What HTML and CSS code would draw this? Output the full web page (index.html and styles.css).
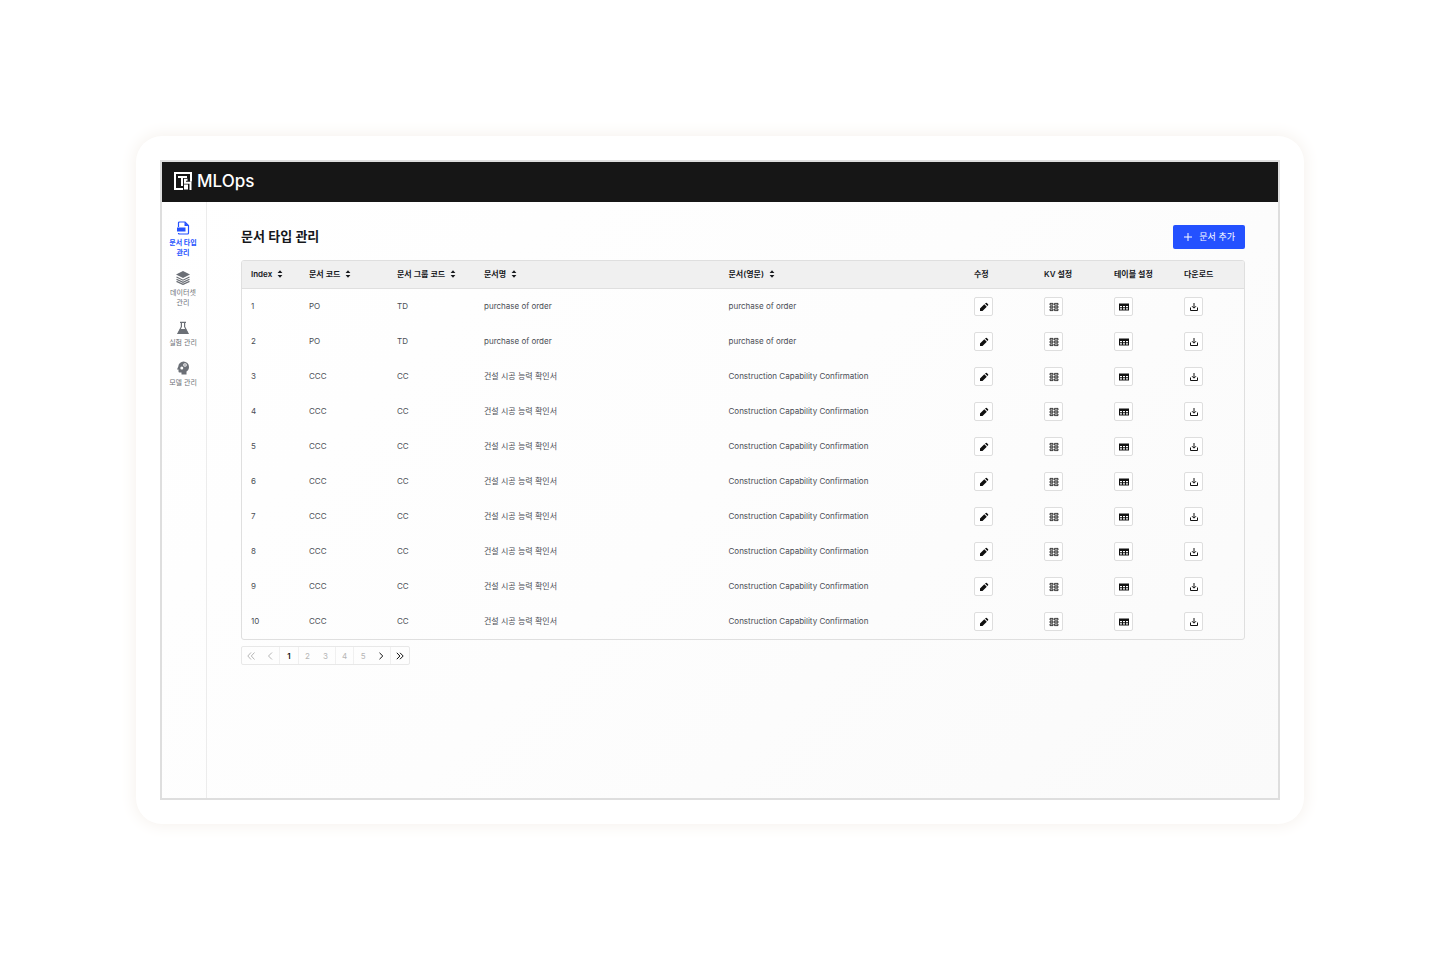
FILE: index.html
```html
<!DOCTYPE html>
<html lang="ko">
<head>
<meta charset="utf-8">
<meta name="viewport" content="width=device-width, initial-scale=1">
<title>MLOps</title>
<link rel="stylesheet" href="styles.css">
<script src="app.js" defer></script>
</head>
<body>
<svg class="sprite" aria-hidden="true">
  <symbol id="i-sort" viewBox="0 0 6 8"><path d="M3 0.2 5.400 3H.6zM3 7.8 5.400 5H.6z"/></symbol>
  <symbol id="i-edit" viewBox="0 0 10 10"><path d="M1 9V6.500L5.300 2.200 7.800 4.700 3.500 9zM6 1.600 6.800.9Q7.300.5 7.800.9L9.100 2.200Q9.500 2.700 9.100 3.200L8.400 4z"/></symbol>
  <symbol id="i-kv" viewBox="0 0 10 10"><path fill="none" stroke="currentColor" stroke-width=".8" d="M1 1.400h3v1.600H1zM5.400 1.400H9v1.600H5.400zM1 4.200h3v1.600H1zM5.400 4.200H9v1.600H5.400zM1 7h3v1.600H1zM5.400 7H9v1.600H5.400z"/></symbol>
  <symbol id="i-table" viewBox="0 0 10 10"><path fill-rule="evenodd" d="M0 1.500h10v7H0zM1 4v1.300h2V4zM4 4v1.300h2V4zM7 4v1.300h2V4zM1 6.200v1.400h2V6.200zM4 6.200v1.400h2V6.200zM7 6.200v1.400h2V6.200z"/></symbol>
  <symbol id="i-down" viewBox="0 0 10 10"><path fill="none" stroke="currentColor" stroke-width="1" d="M5 1v5M3 4.200l2 2 2-2M1.500 5.500v3h7v-3"/></symbol>
</svg>
<div class="device">
  <div class="screen">
    <header class="topbar">
      <svg class="logo" viewBox="0 0 18 18" aria-hidden="true"><path d="M9 17H1V1h16v8.500M4 5h9M8 5v9M13.500 7.800h-2.500v3h5.500V18M11 17.500v-4h2v4"/></svg>
      <span class="brand">MLOps</span>
    </header>
    <div class="body">
      <nav class="side" aria-label="메뉴">
        <a class="item active" href="#types"><svg viewBox="0 0 14 14" aria-hidden="true"><path fill="none" stroke="currentColor" stroke-width="1.200" d="M2.500 6V2Q2.500 1 3.500 1H9l3.500 3.500V12q0 1-1 1h-8q-1 0-1-1"/><path d="M8.500 1v4h4zM1 6.500h8.500v4H1z"/></svg><span>문서 타입<br>관리</span></a>
        <a class="item" href="#datasets"><svg viewBox="0 0 14 14" aria-hidden="true"><path d="M7 0 14 3.500 7 7 0 3.500z"/><path fill="none" stroke="currentColor" stroke-width="1.200" d="M.5 6 7 9.200 13.500 6M.5 8.300 7 11.400l6.500-3.100M.5 10.400 7 13.400l6.500-3"/></svg><span>데이터셋<br>관리</span></a>
        <a class="item" href="#experiments"><svg viewBox="0 0 14 14" aria-hidden="true"><path fill="none" stroke="currentColor" stroke-width="1.200" d="M4 1.300h6M5.400 1.300v4.400L2 12.300h10L8.600 5.700V1.300"/><path d="M4 8h6l2.500 5h-11z"/></svg><span>실험 관리</span></a>
        <a class="item" href="#models"><svg viewBox="0 0 14 14" aria-hidden="true"><path fill-rule="evenodd" d="M7.500.5a5.500 5.500 0 0 1 5.500 5.500c0 2-1 3.500-2.500 4.500v3H5.500v-2H3.500q-1 0-1-1V8.500H1L2.300 5.500A5.300 5.300 0 0 1 7.500.5zM9 2.200a1.800 1.800 0 1 0 0 3.600 1.800 1.800 0 0 0 0-3.600zM5.800 5.500a1.500 1.500 0 1 0 0 3 1.500 1.500 0 0 0 0-3z"/><circle cx="9" cy="4" r=".8"/></svg><span>모델 관리</span></a>
      </nav>
      <main class="main">
        <div class="head">
          <h1>문서 타입 관리</h1>
          <button class="add" type="button"><svg viewBox="0 0 8 8" aria-hidden="true"><path fill="none" stroke="currentColor" d="M4 0v8M0 4h8"/></svg>문서 추가</button>
        </div>
        <div class="frame">
          <table>
            <colgroup><col class="c-index"><col class="c-code"><col class="c-group"><col><col><col class="c-act"><col class="c-act"><col class="c-act"><col class="c-act"></colgroup>
            <thead>
              <tr>
                <th><button type="button">Index<svg><use href="#i-sort"/></svg></button></th>
                <th><button type="button">문서 코드<svg><use href="#i-sort"/></svg></button></th>
                <th><button type="button">문서 그룹 코드<svg><use href="#i-sort"/></svg></button></th>
                <th><button type="button">문서명<svg><use href="#i-sort"/></svg></button></th>
                <th><button type="button">문서(영문)<svg><use href="#i-sort"/></svg></button></th>
                <th class="tool">수정</th><th class="tool">KV 설정</th><th class="tool">테이블 설정</th><th class="tool">다운로드</th>
              </tr>
            </thead>
            <tbody id="rows"></tbody>
          </table>
        </div>
        <nav class="pager" aria-label="페이지">
          <button type="button" disabled aria-label="처음"><svg viewBox="0 0 8 8"><path d="M4 .5.800 4 4 7.500M7.500.5 4.300 4l3.200 3.500"/></svg></button>
          <button type="button" disabled aria-label="이전"><svg viewBox="0 0 8 8"><path d="M6 .5 2.500 4 6 7.500"/></svg></button>
          <button type="button" class="current line" aria-current="page">1</button>
          <button type="button" class="line">2</button>
          <button type="button">3</button>
          <button type="button" class="line">4</button>
          <button type="button" class="line">5</button>
          <button type="button" class="go" aria-label="다음"><svg viewBox="0 0 8 8"><path d="M2.500.8 5.800 4 2.500 7.200"/></svg></button>
          <button type="button" class="go line" aria-label="마지막"><svg viewBox="0 0 8 8"><path d="M.8.8 3.900 4 .8 7.200M4 .8 7.200 4 4 7.200"/></svg></button>
        </nav>
      </main>
    </div>
  </div>
</div>
</body>
</html>
```
FILE: app.js
```js
const order = ["PO", "TD", "purchase of order", "purchase of order"];
const capability = ["CCC", "CC", "건설 시공 능력 확인서", "Construction Capability Confirmation"];
const documents = [order, order, ...Array(8).fill(capability)];
const actions = [["edit", "수정"], ["kv", "KV 설정"], ["table", "테이블 설정"], ["down", "다운로드"]];

document.getElementById("rows").innerHTML = documents.map((doc, i) => {
  const cells = [i + 1, ...doc].map((text) => `<td>${text}</td>`).join("");
  const buttons = actions.map(([icon, label]) =>
    `<td class="tool"><button class="act" type="button" aria-label="${label}"><svg><use href="#i-${icon}"/></svg></button></td>`).join("");
  return `<tr>${cells}${buttons}</tr>`;
}).join("");
```
FILE: styles.css
```css
* { box-sizing: border-box; }
body {
  margin: 0;
  min-height: 100vh;
  padding: 136px;
  display: flex;
  background: #fff;
  color: #16181c;
  font: 8px/10px Inter, "Noto Sans CJK KR", sans-serif;
}
button { font: inherit; color: inherit; background: none; border: 0; padding: 0; cursor: pointer; }
svg { display: block; fill: currentColor; flex: none; }
.sprite { position: absolute; width: 0; height: 0; }
.device {
  flex: 1;
  display: flex;
  padding: 24px;
  border-radius: 26px;
  background: #fff;
  box-shadow: 0 0 16px 2px #f6f2ee;
}
.screen {
  flex: 1;
  display: flex;
  flex-direction: column;
  border: 2px solid #dedede;
  background: linear-gradient(135deg, #fff, #fdfdfd 50%, #fafafa);
}
.topbar {
  height: 40px;
  padding: 0 12px 2px;
  display: flex;
  align-items: center;
  gap: 5px;
  background: #161616;
  color: #fff;
}
.logo { width: 18px; height: 18px; fill: none; stroke: currentColor; stroke-width: 2; }
.brand { font-size: 17px; line-height: 24px; font-weight: 500; }
.body { flex: 1; display: flex; }
.side {
  width: 45px;
  padding: 19px 2px 0 0;
  border-right: 1px solid #ececec;
  display: flex;
  flex-direction: column;
  align-items: center;
  gap: 13px;
}
.item {
  display: flex;
  flex-direction: column;
  align-items: center;
  gap: 3px;
  color: #6b6f76;
  font-size: 7px;
  text-align: center;
  text-decoration: none;
  white-space: nowrap;
}
.item svg { width: 14px; height: 14px; }
.active { color: #2451ff; font-weight: 700; }
.main { flex: 1; min-width: 0; padding: 23px 33px 0 34px; }
.head { display: flex; justify-content: space-between; align-items: center; margin-bottom: 11px; }
h1 { margin: 0; padding-bottom: 2px; font-size: 13px; line-height: 20px; font-weight: 600; }
.add {
  height: 24px;
  padding: 0 10px 0 11px;
  display: flex;
  align-items: center;
  gap: 7px;
  border-radius: 2px;
  background: #2451ff;
  color: #fff;
  font-size: 9px;
}
.add svg { width: 8px; height: 8px; }
.frame { border: 1px solid #dfdfdf; border-radius: 3px; overflow: hidden; }
table { width: 100%; table-layout: fixed; border-collapse: separate; border-spacing: 0; }
th, td { padding: 0 0 2px 9px; text-align: left; white-space: nowrap; }
th { height: 28px; background: #f0f0f0; border-bottom: 1px solid #dfdfdf; font-weight: 600; }
th button { display: flex; align-items: center; gap: 5px; }
th svg { width: 6px; height: 8px; }
td { height: 35px; color: #4a4d55; }
.tool { padding-left: 10px; }
td.tool { padding-bottom: 0; }
.c-index { width: 58px; }
.c-code { width: 88px; }
.c-group { width: 87px; }
.c-act { width: 70px; }
.act {
  display: grid;
  place-items: center;
  width: 19px;
  height: 19px;
  border: 1px solid #dedede;
  border-radius: 2px;
  background: #fff;
  color: #111;
}
.act svg { width: 10px; height: 10px; }
.pager {
  width: 169px;
  height: 19px;
  margin-top: 6px;
  display: grid;
  grid-template-columns: repeat(9, 1fr);
  border: 1px solid #e8e8e8;
  border-radius: 2px;
  color: #b5b5b5;
}
.pager button { display: grid; place-items: center; }
.pager .line { border-left: 1px solid #f0f0f0; }
.pager .current { color: #111; font-weight: 600; }
.pager .go { color: #111; }
.pager svg { width: 8px; height: 8px; fill: none; stroke: currentColor; }
```
